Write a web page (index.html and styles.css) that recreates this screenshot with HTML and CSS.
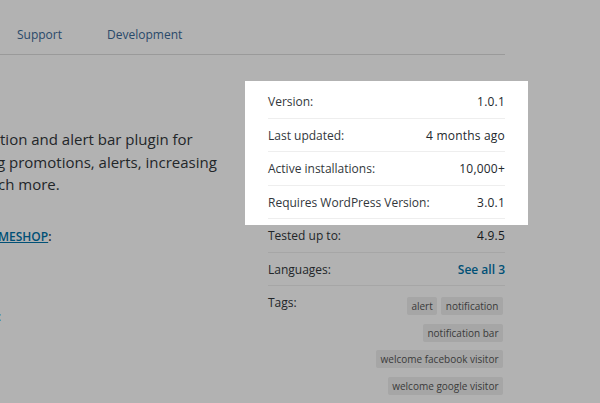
FILE: index.html
```html
<!DOCTYPE html>
<html lang="en">
<head>
    <meta charset="UTF-8">
    <meta name="viewport" content="width=device-width, initial-scale=1.0">
    <title>WP Notification Bars</title>
    <link rel="stylesheet" href="styles.css">
</head>
<body>
    <div class="page">
        <nav class="plugin-nav">
            <a href="#">Support</a>
            <a href="#">Development</a>
        </nav>

        <div class="plugin-body">
            <section class="plugin-main">
                <p class="description">
                    <span class="line">tion and alert bar plugin for</span>
                    <span class="line line-cut-3">g promotions, alerts, increasing</span>
                    <span class="line line-cut-2">ch more.</span>
                </p>
                <p class="author"><a href="#">meshop</a>:</p>
                <p class="links"><a href="#">:</a></p>
            </section>

            <aside class="plugin-meta">
                <!-- spotlight over the first four rows, dims the rest of the page -->
                <div class="spotlight"></div>
                <ul>
                    <li>Version: <strong>1.0.1</strong></li>
                    <li>Last updated: <strong>4 months ago</strong></li>
                    <li>Active installations: <strong>10,000+</strong></li>
                    <li>Requires WordPress Version: <strong>3.0.1</strong></li>
                    <li>Tested up to: <strong>4.9.5</strong></li>
                    <li>Languages: <strong><a class="see-all" href="#">See all 3</a></strong></li>
                    <li class="tags-row">
                        <span>Tags:</span>
                        <div class="tags">
                            <a href="#">alert</a>
                            <a href="#">notification</a>
                            <a href="#">notification bar</a>
                            <a href="#">welcome facebook visitor</a>
                            <a href="#">welcome google visitor</a>
                        </div>
                    </li>
                </ul>
            </aside>
        </div>
    </div>
</body>
</html>
```

FILE: styles.css
```css
/* Resetting some default styles */
* {
    margin: 0;
    padding: 0;
    box-sizing: border-box;
}

body {
    font-family: 'Open Sans', sans-serif;
    color: #32373c;
    background: #fff;
    overflow: hidden;
    height: 403px;
}

a {
    color: #0073aa;
    text-decoration: none;
}

.page {
    width: 505px;
}

/* Top tabs */
.plugin-nav {
    display: flex;
    gap: 45px;
    height: 55px;
    padding: 26px 0 0 17px;
    font-size: 12px;
    line-height: 18px;
    border-bottom: 1px solid #ddd;
}

.plugin-nav a {
    color: #3b6a98;
}

.plugin-body {
    display: flex;
    justify-content: space-between;
}

/* Left column, cut off by the window edge */
.plugin-main {
    flex: 1;
    overflow: hidden;
}

.description {
    margin-top: 73px;
    font-size: 15px;
    line-height: 22.5px;
}

.line {
    display: block;
    white-space: nowrap;
}

.line-cut-2 {
    text-indent: -2px;
}

.line-cut-3 {
    text-indent: -3px;
}

.author {
    margin-top: 32px;
    font-size: 12px;
    line-height: 18px;
    font-weight: 600;
    text-transform: uppercase;
    text-indent: -2px;
}

.author a {
    text-decoration: underline;
}

.links {
    margin-top: 62px;
    font-size: 12px;
    line-height: 18px;
    text-indent: -2px;
}

/* Right column */
.plugin-meta {
    position: relative;
    width: 237px;
    margin-top: 30px;
}

.spotlight {
    position: absolute;
    top: -4px;
    left: -23px;
    width: 283px;
    height: 144px;
    box-shadow: 0 0 0 1200px rgba(0, 0, 0, 0.3);
    z-index: 2;
    pointer-events: none;
}

.plugin-meta ul {
    list-style: none;
}

.plugin-meta li {
    display: flex;
    justify-content: space-between;
    align-items: flex-start;
    font-size: 12px;
    line-height: 19.5px;
    padding: 7px 0 6px;
    border-bottom: 1px solid #eee;
}

.plugin-meta strong {
    font-weight: 400;
    color: #23282d;
    letter-spacing: 0.2px;
}

.plugin-meta .see-all {
    font-weight: 600;
    letter-spacing: 0;
}

.tags-row {
    border-bottom: none !important;
}

.tags {
    display: flex;
    flex-wrap: wrap;
    justify-content: flex-end;
    gap: 8.5px 4px;
    width: 140px;
    margin-top: 4px;
    padding-right: 2px;
}

.tags a {
    display: block;
    padding: 2px 4.5px;
    font-size: 10px;
    line-height: 14px;
    color: #555;
    background: #eee;
    border-radius: 2px;
    white-space: nowrap;
}
```
